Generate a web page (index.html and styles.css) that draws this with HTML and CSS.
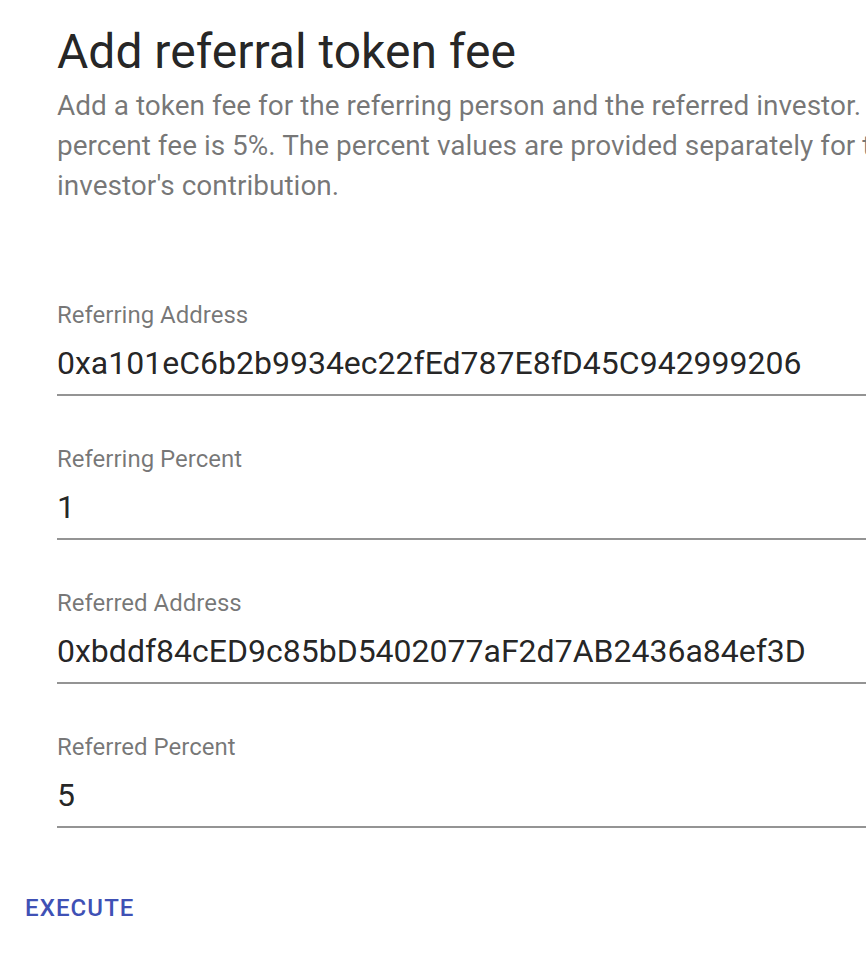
FILE: index.html
```html
<!DOCTYPE html>
<html>
<head>
<meta charset="utf-8">
<link rel="stylesheet" href="styles.css">
</head>
<body>
<div class="dialog">
  <div class="content">
    <h2 class="title">Add referral token fee</h2>
    <p class="desc">Add a token fee for the referring person and the referred investor. The maximum percent fee is 5%. The percent values are provided separately for the referrer and the investor's contribution.</p>
    <div class="fields">
      <div class="field">
        <label class="label">Referring Address</label>
        <div class="input">0xa101eC6b2b9934ec22fEd787E8fD45C942999206</div>
      </div>
      <div class="field">
        <label class="label">Referring Percent</label>
        <div class="input">1</div>
      </div>
      <div class="field">
        <label class="label">Referred Address</label>
        <div class="input">0xbddf84cED9c85bD5402077aF2d7AB2436a84ef3D</div>
      </div>
      <div class="field">
        <label class="label">Referred Percent</label>
        <div class="input">5</div>
      </div>
    </div>
  </div>
  <div class="actions">
    <button class="btn">EXECUTE</button>
  </div>
</div>
</body>
</html>
```
FILE: styles.css
```css
html, body {
  margin: 0;
  padding: 0;
  background: #ffffff;
  overflow: hidden;
}
body {
  font-family: Roboto, "Liberation Sans", sans-serif;
  width: 866px;
  height: 960px;
}
.dialog {
  width: 1200px;
}
.content {
  padding-left: 57px;
}
.title {
  margin: 0;
  padding-top: 24px;
  font-size: 48px;
  font-weight: 400;
  line-height: 56px;
  color: rgba(0,0,0,0.87);
}
.desc {
  margin: 6px 0 0;
  font-size: 28px;
  line-height: 40px;
  color: rgba(0,0,0,0.54);
  width: 1090px;
}
.fields {
  padding-top: 94px;
}
.field {
  display: flex;
  flex-direction: column;
  border-bottom: 2px solid rgba(0,0,0,0.42);
  margin-bottom: 48px;
}
.label {
  font-size: 24px;
  line-height: 30px;
  color: rgba(0,0,0,0.54);
}
.input {
  font-size: 32px;
  line-height: 40px;
  padding: 13px 0 11px;
  color: rgba(0,0,0,0.87);
  white-space: nowrap;
}
.actions {
  padding-left: 25px;
  padding-top: 14px;
}
.btn {
  border: 0;
  background: none;
  padding: 0;
  font-family: Roboto, "Liberation Sans", sans-serif;
  font-size: 24px;
  line-height: 36px;
  font-weight: 500;
  color: #3f51b5;
  letter-spacing: 1.1px;
}
```
